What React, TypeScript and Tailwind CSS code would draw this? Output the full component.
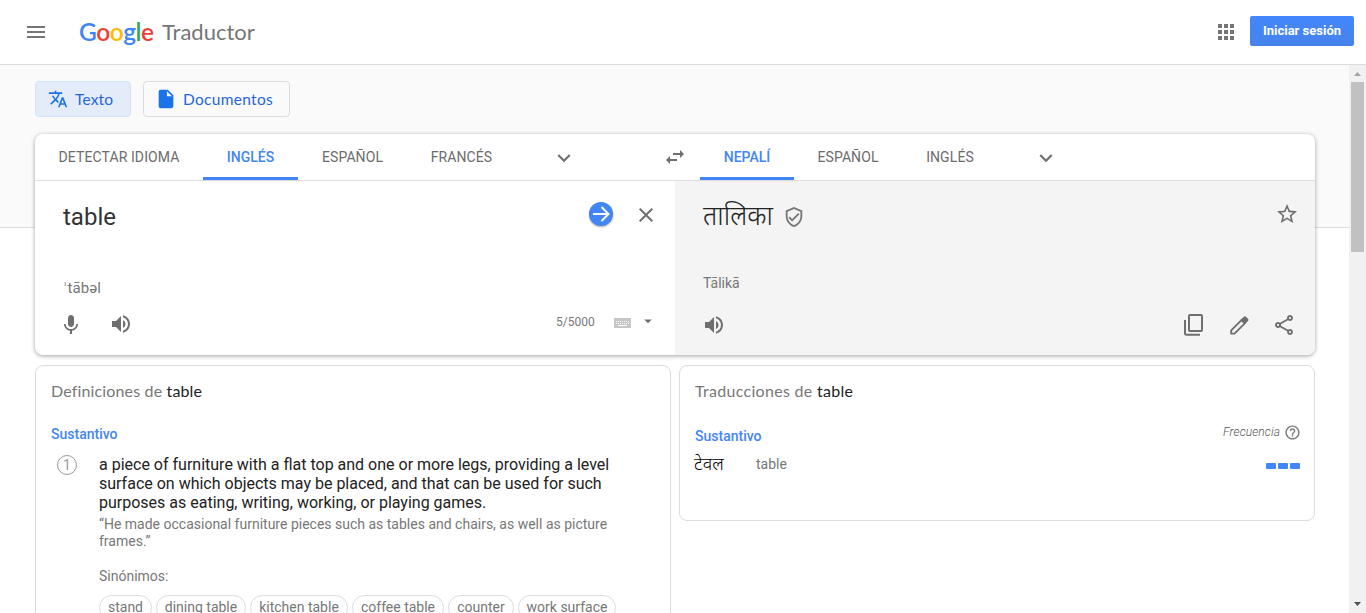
import React from "react";
import {
  MdMenu,
  MdApps,
  MdTranslate,
  MdInsertDriveFile,
  MdSwapHoriz,
  MdExpandMore,
  MdClose,
  MdOutlineVerifiedUser,
  MdStarBorder,
  MdMic,
  MdVolumeUp,
  MdArrowDropDown,
  MdOutlineShare,
  MdHelpOutline,
} from "react-icons/md";

type TabProps = { label: string; width: string; active?: boolean };

function Tab({ label, width, active }: TabProps) {
  return (
    <button
      className={`${width} box-border flex h-[46px] shrink-0 justify-center border-b-[3px] pt-[13px] text-[14px] leading-5 whitespace-nowrap ${
        active
          ? "border-[#4285f4] font-medium text-[#4285f4]"
          : "border-transparent font-normal tracking-[0.1px] text-[#6c6c6c]"
      }`}
    >
      {label}
    </button>
  );
}

function GoogleLogo() {
  return (
    <span className="flex font-['Lato'] text-[24.5px] leading-8 font-semibold tracking-[-0.55px]">
      <span className="text-[#4285f4]">G</span>
      <span className="text-[#ea4335]">o</span>
      <span className="text-[#fbbc05]">o</span>
      <span className="text-[#4285f4]">g</span>
      <span className="text-[#34a853]">l</span>
      <span className="text-[#ea4335]">e</span>
    </span>
  );
}

function ArrowIcon() {
  return (
    <span className="flex size-6 items-center justify-center rounded-full bg-[#4285f4] shadow-[0_1px_2px_rgba(0,0,0,0.35)]">
      <svg width="24" height="24" viewBox="0 0 24 24" fill="none" stroke="#fff" strokeWidth="2">
        <path d="M4 12h15M12.5 5l7 7-7 7" />
      </svg>
    </span>
  );
}

function KeyboardIcon() {
  return (
    <svg width="17" height="10" viewBox="0 0 17 10">
      <rect width="17" height="10" fill="#c6c6c6" />
      <path d="M2 3.500h13M2 5.500h13" stroke="#fff" strokeWidth="1" strokeDasharray="1 1" />
      <path d="M4 7.500h9" stroke="#fff" strokeWidth="1" />
    </svg>
  );
}

function CopyIcon() {
  return (
    <svg width="20" height="22" viewBox="0 0 20 22" fill="none" stroke="#6f6f6f" strokeWidth="2">
      <rect x="5" y="1" width="13" height="16" rx="1" />
      <path d="M1 6v13.5a1.3 1.3 0 0 0 1.3 1.3H16" />
    </svg>
  );
}

function PencilIcon() {
  return (
    <svg width="19" height="19" viewBox="0 0 19 19">
      <path d="M1.200 14.300 11.500 4l3.300 3.300L4.500 17.600H1.200z" fill="none" stroke="#6f6f6f" strokeWidth="1.900" />
      <path d="M10.500 4 13.800.700q1.100-1 2.200 0l2 2q1 1.100 0 2.200L14.700 8.200z" fill="#6f6f6f" />
    </svg>
  );
}

const synonyms = [
  { label: "stand", width: "w-[53px]" },
  { label: "dining table", width: "w-[90px]" },
  { label: "kitchen table", width: "w-[98px]" },
  { label: "coffee table", width: "w-[92px]" },
  { label: "counter", width: "w-[66px]" },
  { label: "work surface", width: "w-[98px]" },
];

export default function App() {
  return (
    <div className="flex h-[613px] w-[1366px] flex-col overflow-hidden bg-white font-['Roboto','Noto_Sans',sans-serif] text-[#222]">
      <header className="flex h-[65px] shrink-0 items-center border-b border-[#dadce0] pr-3 pb-px pl-6">
        <MdMenu className="size-6 text-[#757575]" />
        <div className="ml-[31px] flex w-[83px]">
          <GoogleLogo />
        </div>
        <span className="pt-px font-['Lato'] text-[22px] leading-8 text-[#757575]">Traductor</span>
        <MdApps className="ml-auto size-6 text-[#757575]" />
        <button className="mt-[-2px] ml-3 h-[30px] w-[104px] rounded-[2px] bg-linear-to-b from-[#4387fd] to-[#4683ea] text-[13px] leading-[28px] font-bold text-white">
          Iniciar sesión
        </button>
      </header>

      <div className="flex min-h-0 flex-1">
        <main className="w-[1349px] overflow-hidden">
          <div className="h-[163px] border-b border-[#dadce0] bg-[#fafafa] pt-4 pl-[35px]">
            <div className="flex gap-3 font-['Lato'] text-[15.5px] text-[#2466dc]">
              <button className="flex h-9 w-24 items-center rounded-[4px] border border-[#d2e3fc] bg-[#e4ebf9] pl-3">
                <MdTranslate className="size-5 text-[#1a73e8]" />
                <span className="ml-[7px] leading-5 tracking-[0.15px]">Texto</span>
              </button>
              <button className="flex h-9 w-[147px] items-center rounded-[4px] border border-[#dadce0] pl-[11px]">
                <MdInsertDriveFile className="size-[22px] text-[#1a73e8]" />
                <span className="ml-[6px] leading-5 tracking-[0.3px]">Documentos</span>
              </button>
            </div>
          </div>

          <section className="relative mt-[-94px] ml-[35px] h-[221px] w-[1280px] rounded-lg bg-white shadow-[0_1px_4px_rgba(0,0,0,0.37)]">
            <div className="flex h-[47px] border-b border-[#dadce0]">
              <Tab label="DETECTAR IDIOMA" width="w-[168px]" />
              <Tab label="INGLÉS" width="w-[95px]" active />
              <Tab label="ESPAÑOL" width="w-[109px]" />
              <Tab label="FRANCÉS" width="w-[109px]" />
              <MdExpandMore className="mt-[11px] ml-[35px] size-[26px] text-[#6f6f6f]" />
              <MdSwapHoriz className="mt-[11px] ml-[86px] size-6 text-[#6f6f6f]" />
              <div className="ml-[13px] flex">
                <Tab label="NEPALÍ" width="w-[94px]" active />
                <Tab label="ESPAÑOL" width="w-[108px]" />
                <Tab label="INGLÉS" width="w-24" />
                <MdExpandMore className="mt-[11px] ml-[35px] size-[26px] text-[#6f6f6f]" />
              </div>
            </div>

            <div className="flex h-[174px]">
              <div className="flex w-[640px] flex-col pl-7">
                <div className="flex h-[97px] pt-[21px]">
                  <span className="w-[526px] text-[24px] leading-[30px] text-[#333]">table</span>
                  <ArrowIcon />
                  <MdClose className="mt-px ml-[21px] size-6 text-[#6f6f6f]" />
                </div>
                <p className="h-[34px] pl-px text-[15px] leading-5 tracking-[0.1px] text-[#777]">
                  <span className="mr-px text-[#aaa]">ˈ</span>tābəl
                </p>
                <div className="flex">
                  <MdMic className="mt-px ml-[-4px] size-6 text-[#6f6f6f]" />
                  <MdVolumeUp className="ml-[26px] size-6 text-[#6f6f6f]" />
                  <span className="ml-[423px] w-[39px] text-[12px] leading-5 text-[#777]">5/5000</span>
                  <span className="mt-[6px] ml-[19px]">
                    <KeyboardIcon />
                  </span>
                  <MdArrowDropDown className="ml-2 size-[18px] text-[#6f6f6f]" />
                </div>
              </div>

              <div className="flex flex-1 flex-col rounded-br-lg bg-[#f4f4f4] pl-[27px]">
                <div className="flex h-[92px] pt-5">
                  <span className="w-[81px] pl-px text-[26.5px] leading-[30px] font-light whitespace-nowrap">
                    तालिका
                  </span>
                  <MdOutlineVerifiedUser className="mt-[5px] size-[22px] text-[#777]" />
                  <MdStarBorder className="mt-px mr-4 ml-auto size-6 text-[#6f6f6f]" />
                </div>
                <p className="h-10 pl-px text-[14px] leading-5 text-[#777]">Tālikā</p>
                <div className="flex pr-[19px]">
                  <MdVolumeUp className="size-6 text-[#6f6f6f]" />
                  <span className="mt-px ml-auto">
                    <CopyIcon />
                  </span>
                  <span className="mt-[3px] ml-[26px]">
                    <PencilIcon />
                  </span>
                  <MdOutlineShare className="ml-[23px] size-6 text-[#6f6f6f]" />
                </div>
              </div>
            </div>
          </section>

          <div className="mt-[10px] ml-[35px] flex items-start gap-2">
            <section className="h-[400px] w-[636px] rounded-lg border border-[#dadce0] pt-[15px] pl-[15px]">
              <h2 className="font-['Lato'] text-[16px] leading-5 tracking-[0.15px] text-[#777]">
                Definiciones de <span className="text-[#222]">table</span>
              </h2>
              <h3 className="mt-[23px] text-[14px] leading-5 font-medium text-[#4285f4]">Sustantivo</h3>
              <div className="mt-[11px] flex">
                <span className="ml-[6px] flex size-5 shrink-0 items-center justify-center rounded-full border border-[#999] text-[14px] leading-[18px] text-[#999]">
                  1
                </span>
                <div className="ml-[22px]">
                  <p className="w-[530px] text-[16px] leading-[19px]">
                    a piece of furniture with a flat top and one or more legs, providing a level
                    <br />
                    surface on which objects may be placed, and that can be used for such
                    <br />
                    purposes as eating, writing, working, or playing games.
                  </p>
                  <p className="mt-1 w-[530px] text-[14px] leading-[17px] text-[#777]">
                    “He made occasional furniture pieces such as tables and chairs, as well as picture
                    <br />
                    frames.”
                  </p>
                  <p className="mt-4 text-[14px] leading-5 text-[#777]">Sinónimos:</p>
                  <div className="mt-[9px] flex gap-1">
                    {synonyms.map((s) => (
                      <span
                        key={s.label}
                        className={`${s.width} h-[25px] shrink-0 rounded-full border border-[#dadce0] text-center text-[14px] leading-[22px] whitespace-nowrap text-[#777]`}
                      >
                        {s.label}
                      </span>
                    ))}
                  </div>
                </div>
              </div>
            </section>

            <section className="h-[156px] w-[636px] rounded-lg border border-[#dadce0] px-[15px] pt-[15px]">
              <h2 className="font-['Lato'] text-[16px] leading-5 tracking-[0.3px] text-[#777]">
                Traducciones de <span className="text-[#222]">table</span>
              </h2>
              <div className="mt-[21px] flex justify-between">
                <h3 className="mt-1 text-[14px] leading-5 font-medium text-[#4285f4]">Sustantivo</h3>
                <div className="flex h-5 items-center">
                  <span className="text-[12px] leading-5 font-light tracking-[0.1px] text-[#555] italic">Frecuencia</span>
                  <MdHelpOutline className="mr-[-2px] ml-1 size-[17px] text-[#777]" />
                </div>
              </div>
              <div className="mt-2 flex h-5 items-center leading-5">
                <span className="ml-[-1px] w-[62px] text-[18px] font-light text-black">टेवल</span>
                <span className="text-[14px] text-[#777]">table</span>
                <div className="mt-[3px] mr-[-1px] ml-auto flex gap-[2px]">
                  <span className="h-[6px] w-[10px] rounded-[1px] bg-[#4285f4]" />
                  <span className="h-[6px] w-[10px] rounded-[1px] bg-[#4285f4]" />
                  <span className="h-[6px] w-[10px] rounded-[1px] bg-[#4285f4]" />
                </div>
              </div>
            </section>
          </div>
        </main>

        <aside className="flex w-[17px] flex-col items-center bg-[#f1f1f1]">
          <svg width="17" height="17" viewBox="0 0 17 17">
            <path d="M5 11h7L8.500 7z" fill="#a3a3a3" />
          </svg>
          <div className="h-[170px] w-[13px] bg-[#c1c1c1]" />
          <svg className="mt-auto" width="17" height="17" viewBox="0 0 17 17">
            <path d="M5 6h7L8.500 10z" fill="#505050" />
          </svg>
        </aside>
      </div>
    </div>
  );
}
